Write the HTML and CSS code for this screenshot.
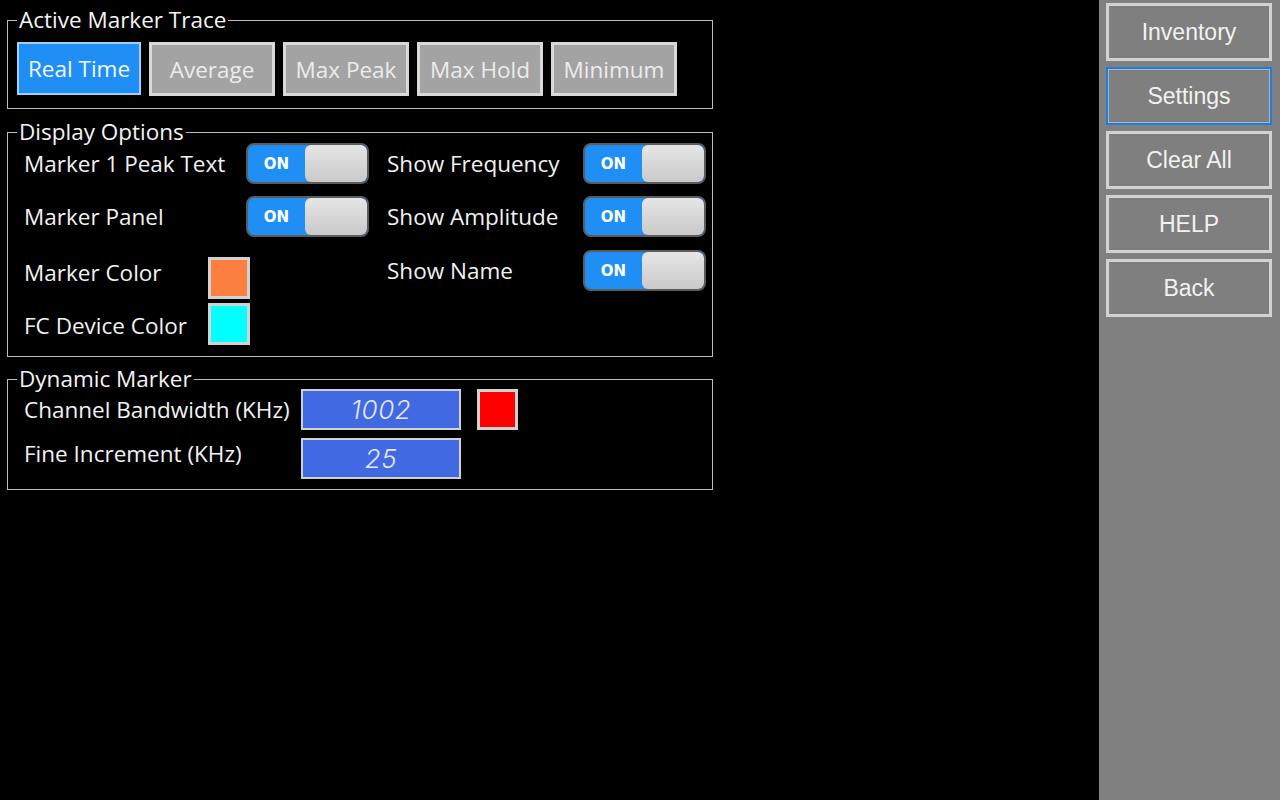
FILE: index.html
```html
<!DOCTYPE html>
<html lang="en">
<head>
  <meta charset="UTF-8">
  <meta name="viewport" content="width=device-width, initial-scale=1.0">
  <title>Marker Settings</title>
  <link rel="stylesheet" href="styles.css">
</head>
<body>

  <div class="screen">
    <div class="main">

      <fieldset class="group trace">
        <legend>Active Marker Trace</legend>
        <div class="trace-buttons">
          <button class="trace-btn selected">Real Time</button>
          <button class="trace-btn">Average</button>
          <button class="trace-btn">Max Peak</button>
          <button class="trace-btn">Max Hold</button>
          <button class="trace-btn">Minimum</button>
        </div>
      </fieldset>

      <fieldset class="group options">
        <legend>Display Options</legend>
        <div class="options-cols">
          <div class="col col-left">
            <div class="row">
              <span class="label">Marker 1 Peak Text</span>
              <div class="toggle"><span class="toggle-on">ON</span><span class="thumb"></span></div>
            </div>
            <div class="row">
              <span class="label">Marker Panel</span>
              <div class="toggle"><span class="toggle-on">ON</span><span class="thumb"></span></div>
            </div>
            <div class="row color-row first-color">
              <span class="label">Marker Color</span>
              <span class="swatch orange"></span>
            </div>
            <div class="row color-row">
              <span class="label">FC Device Color</span>
              <span class="swatch cyan"></span>
            </div>
          </div>
          <div class="col col-right">
            <div class="row">
              <span class="label">Show Frequency</span>
              <div class="toggle"><span class="toggle-on">ON</span><span class="thumb"></span></div>
            </div>
            <div class="row">
              <span class="label">Show Amplitude</span>
              <div class="toggle"><span class="toggle-on">ON</span><span class="thumb"></span></div>
            </div>
            <div class="row">
              <span class="label">Show Name</span>
              <div class="toggle"><span class="toggle-on">ON</span><span class="thumb"></span></div>
            </div>
          </div>
        </div>
      </fieldset>

      <fieldset class="group dynamic">
        <legend>Dynamic Marker</legend>
        <div class="dyn-row">
          <span class="label">Channel Bandwidth (KHz)</span>
          <div class="value-box">1002</div>
          <span class="swatch red"></span>
        </div>
        <div class="dyn-row">
          <span class="label raised">Fine Increment (KHz)</span>
          <div class="value-box">25</div>
        </div>
      </fieldset>

    </div>

    <div class="sidebar">
      <button class="side-btn">Inventory</button>
      <button class="side-btn current">Settings</button>
      <button class="side-btn">Clear All</button>
      <button class="side-btn">HELP</button>
      <button class="side-btn">Back</button>
    </div>
  </div>

</body>
</html>
```

FILE: styles.css
```css
body {
  margin: 0;
  background-color: #000;
  color: #f2f2f2;
  font-family: "Open Sans", "Noto Sans", sans-serif;
  overflow: hidden;
}

.screen {
  display: flex;
  height: 100vh;
}

.main {
  flex: 1;
  padding: 8px 0 0 7px;
}

.group {
  box-sizing: border-box;
  width: 706px;
  margin: 0 0 10px 0;
  padding: 10px 9px 12px 9px;
  border: 1px solid #bdbdbd;
}

legend {
  padding: 0 2px;
  font-size: 22.5px;
  line-height: 24px;
  color: #f4f4f4;
}

.label {
  font-size: 22.5px;
  color: #f2f2f2;
  white-space: nowrap;
}

/* Active Marker Trace */
.trace-buttons {
  display: flex;
  gap: 8px;
}

.trace-btn {
  box-sizing: border-box;
  width: 126px;
  height: 54px;
  padding: 0;
  font-family: inherit;
  font-size: 22.5px;
  color: #ececec;
  background-color: #a3a3a3;
  border: 3px solid #d9d9d9;
}

.trace-btn.selected {
  width: 124px;
  height: 53px;
  background-color: #1f8ff6;
  border: 2px solid #9fd0ff;
  color: #f4f8ff;
}

/* Display Options */
.options {
  margin-top: 11px;
  padding: 0 5px 12px 9px;
}

.options-cols {
  display: flex;
  gap: 18px;
  padding-left: 7px;
  margin-top: -1px;
}

.col-left {
  width: 345px;
}

.col-right {
  width: 320px;
}

.row {
  display: flex;
  align-items: center;
  height: 41px;
  margin-bottom: 12px;
}

.col-left .row .label {
  width: 222px;
}

.col-left .color-row .label {
  width: 184px;
}

.col-right .row .label {
  width: 196px;
}

.col-right .row:last-child {
  margin-top: 13px;
}

.color-row.first-color {
  height: 50px;
  margin-bottom: 4px;
}

.color-row.first-color .label {
  margin-top: -4px;
}

.color-row.first-color .swatch {
  align-self: flex-end;
}

.color-row:last-child {
  margin-bottom: 0;
}

.color-row:last-child .label {
  margin-top: 3px;
}

.toggle {
  box-sizing: border-box;
  display: flex;
  width: 123px;
  height: 41px;
  border: 2px solid #5c5c5c;
  border-radius: 8px;
  background-color: #1f8ff6;
  overflow: hidden;
}

.toggle-on {
  flex: 1;
  display: flex;
  align-items: center;
  justify-content: center;
  font-family: "DejaVu Sans", sans-serif;
  font-weight: bold;
  font-size: 15px;
  color: #fff;
}

.thumb {
  width: 62px;
  border-radius: 6px;
  background: linear-gradient(#e6e6e6, #c9c9c9);
}

.swatch {
  box-sizing: border-box;
  width: 42px;
  height: 42px;
  border: 3px solid #d2d2d2;
}

.orange {
  background-color: #fd7f40;
}

.cyan {
  background-color: #00ffff;
}

.red {
  background-color: #ff0000;
  width: 41px;
  height: 41px;
  margin-left: 16px;
}

/* Dynamic Marker */
.dynamic {
  padding: 0 9px 10px 9px;
}

.dyn-row {
  display: flex;
  align-items: center;
  padding-left: 7px;
  margin-top: -2px;
}

.dyn-row + .dyn-row {
  margin-top: 8px;
}

.dyn-row .label {
  width: 277px;
}

.dyn-row .label.raised {
  margin-top: -10px;
}

.value-box {
  box-sizing: border-box;
  width: 160px;
  height: 41px;
  display: flex;
  align-items: center;
  justify-content: center;
  background-color: #4169e1;
  border: 2px solid #d0d0d0;
  font-family: Inter, sans-serif;
  font-weight: 300;
  font-style: italic;
  font-size: 26px;
  letter-spacing: 0.5px;
  color: #e4e8ff;
}

/* Sidebar */
.sidebar {
  width: 181px;
  box-sizing: border-box;
  padding: 3px 8px 0 7px;
  background-color: #808080;
  display: flex;
  flex-direction: column;
  gap: 6px;
}

.side-btn {
  box-sizing: border-box;
  width: 166px;
  height: 58px;
  padding: 0;
  background-color: #7f7f7f;
  border: 3px solid #d3d3d3;
  font-family: "Liberation Sans", Arial, sans-serif;
  font-size: 23px;
  color: #f2f2f2;
}

.side-btn.current {
  border: 2px solid #1f7fd8;
  box-shadow: inset 0 0 0 1px #9bb7d3;
}
```
